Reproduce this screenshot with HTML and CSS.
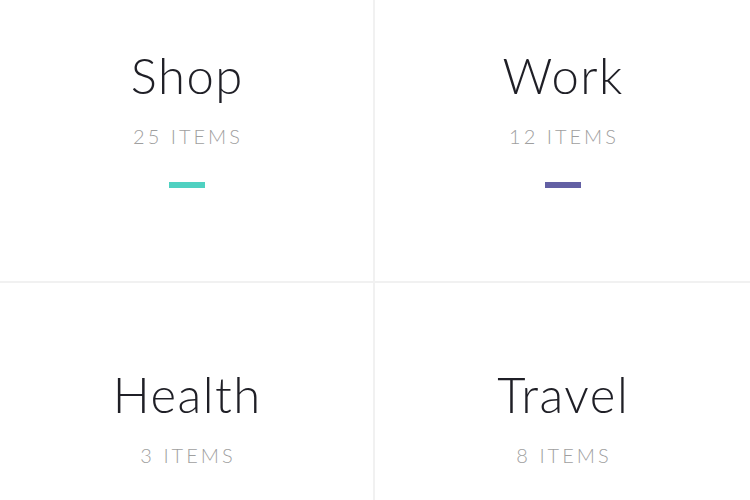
FILE: index.html
```html
<!DOCTYPE html>
<html lang="en">
<head>
<meta charset="utf-8">
<title>Categories</title>
<link rel="stylesheet" href="styles.css">
</head>
<body>
  <main class="viewport">
    <div class="grid">
      <section class="cell">
        <h2 class="title">Shop</h2>
        <p class="count">25 ITEMS</p>
        <span class="bar bar-teal"></span>
      </section>
      <section class="cell">
        <h2 class="title">Work</h2>
        <p class="count">12 ITEMS</p>
        <span class="bar bar-purple"></span>
      </section>
      <section class="cell">
        <h2 class="title">Health</h2>
        <p class="count">3 ITEMS</p>
        <span class="bar bar-yellow"></span>
      </section>
      <section class="cell">
        <h2 class="title">Travel</h2>
        <p class="count">8 ITEMS</p>
        <span class="bar bar-orange"></span>
      </section>
    </div>
  </main>
</body>
</html>
```
FILE: styles.css
```css
html, body {
  margin: 0;
  padding: 0;
  background: #ffffff;
}

.viewport {
  width: 750px;
  height: 500px;
  overflow: hidden;
}

.grid {
  display: grid;
  grid-template-columns: 373px 1fr;
  grid-auto-rows: 317px;
  gap: 2px;
  background: #f1f1f1;
  margin-top: -36px;
}

.cell {
  background: #ffffff;
  display: flex;
  flex-direction: column;
  align-items: center;
  padding-top: 87px;
  box-sizing: border-box;
}

.title {
  margin: 0;
  font-family: Lato, "Open Sans", sans-serif;
  font-weight: 300;
  font-size: 49px;
  line-height: 48px;
  letter-spacing: 1.5px;
  padding-left: 1.5px;
  color: #1f1f26;
}

.count {
  margin: 27px 0 0;
  font-family: Lato, "Open Sans", sans-serif;
  font-weight: 300;
  font-size: 20px;
  line-height: 20px;
  letter-spacing: 3px;
  padding-left: 3px;
  color: #9f9f9f;
}

.bar {
  display: block;
  width: 36px;
  height: 6px;
  margin-top: 36px;
}

.bar-teal { background: #4fd1c1; }
.bar-purple { background: #6360a4; }
.bar-yellow { background: #f6cd55; }
.bar-orange { background: #f5b25a; }
```
